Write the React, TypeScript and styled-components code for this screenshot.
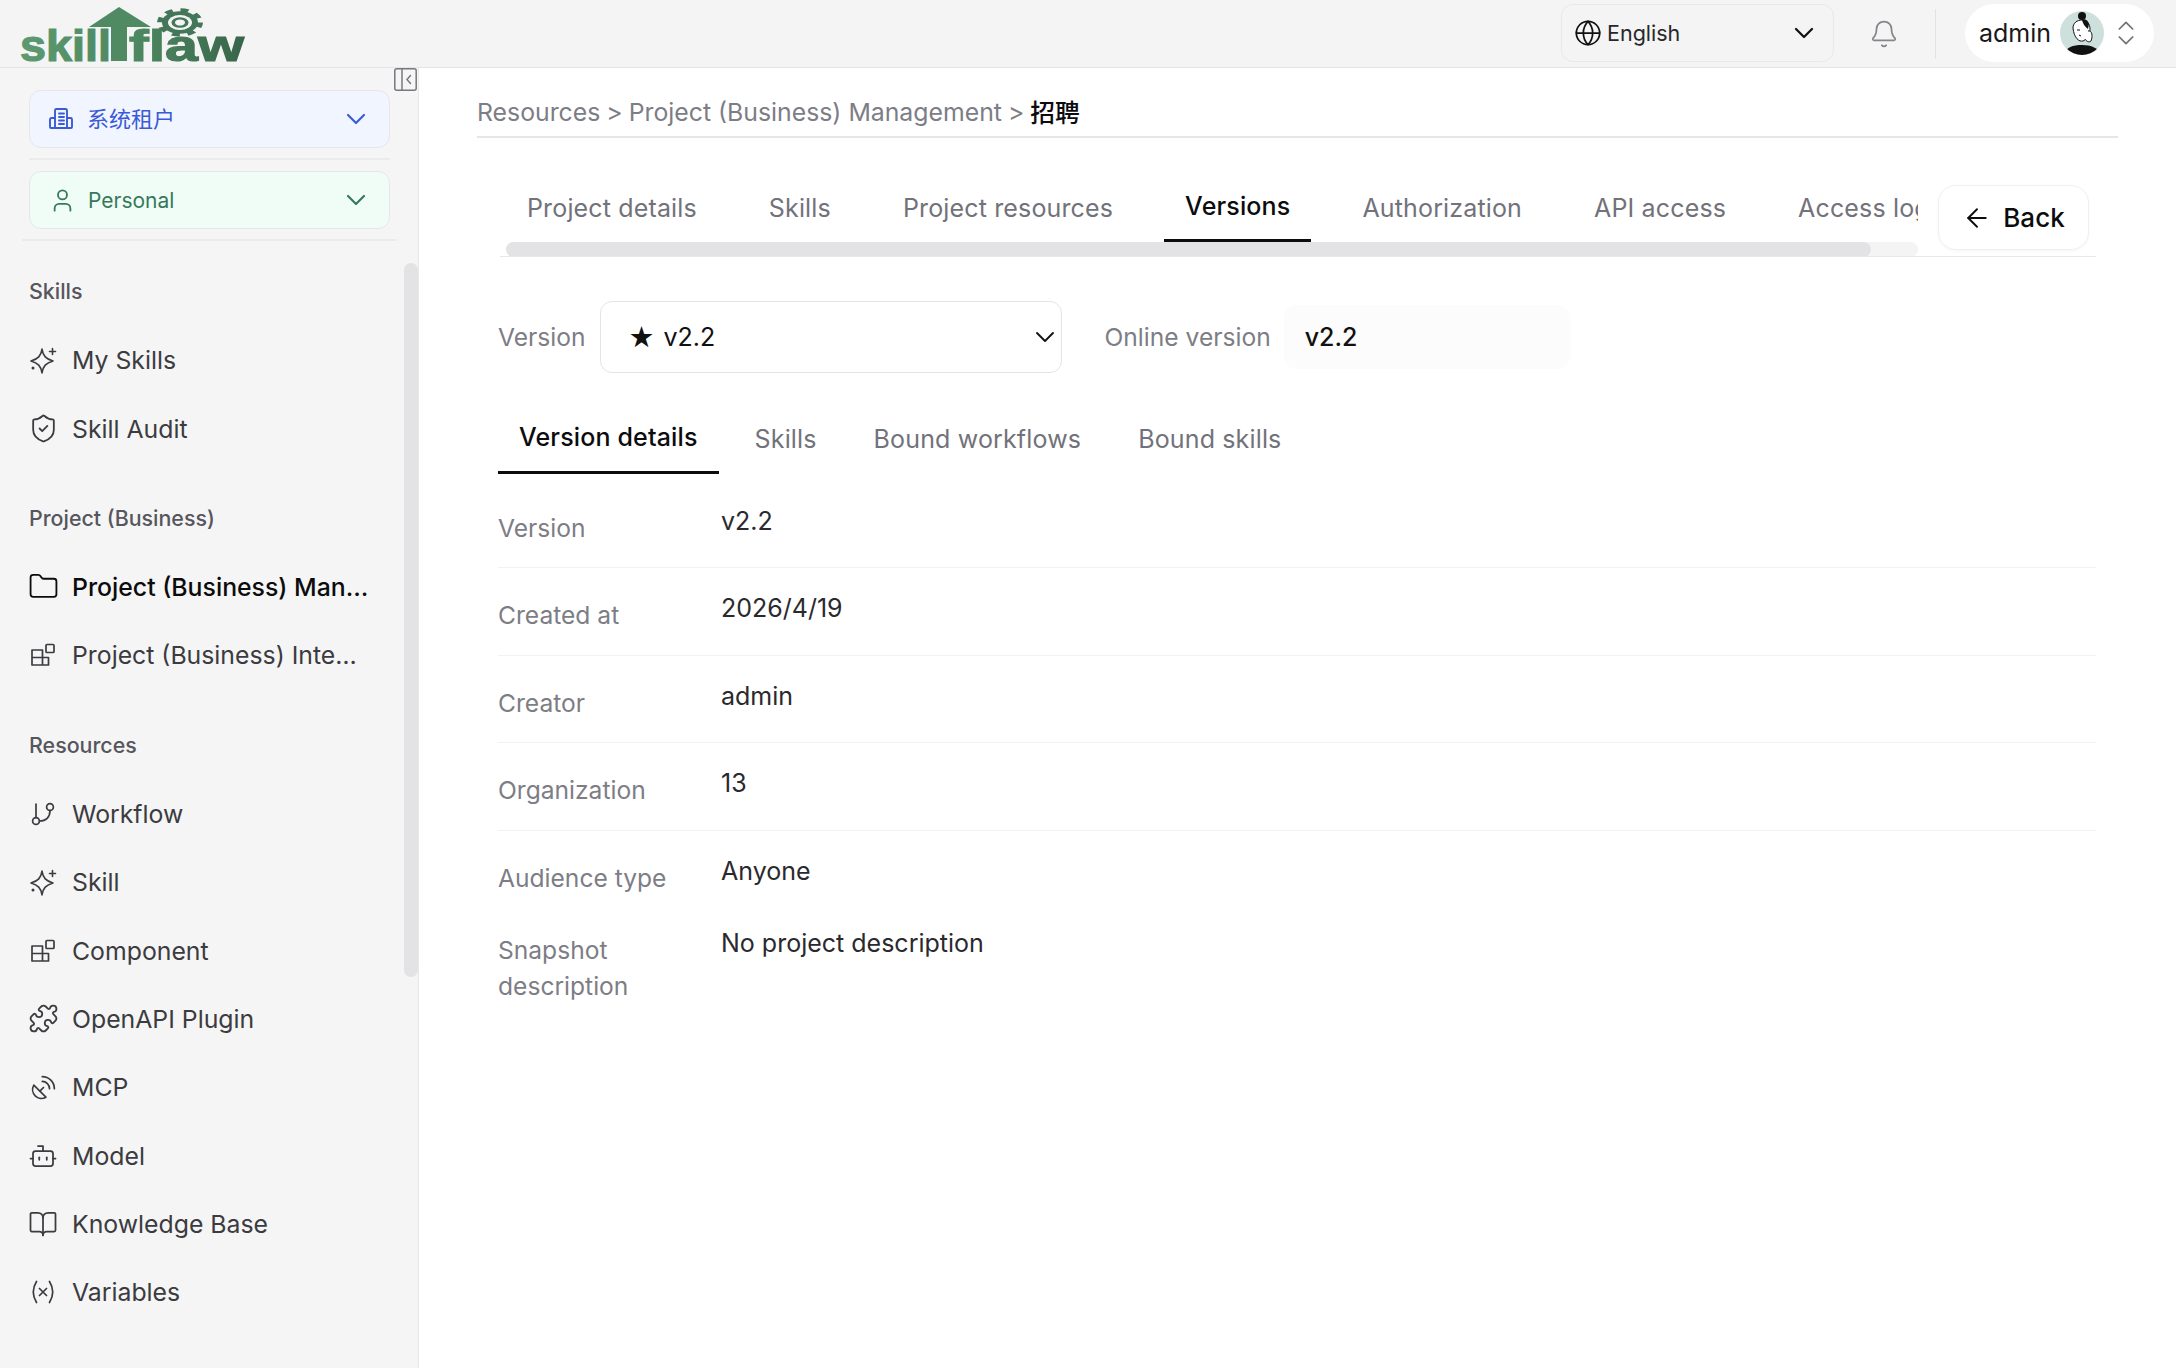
import React from "react";
import styled, { createGlobalStyle } from "styled-components";
import {
  ArrowLeft,
  Bell,
  BookOpen,
  Bot,
  ChevronDown,
  ChevronsUpDown,
  Folder,
  Globe,
  Puzzle,
  SatelliteDish,
  ShieldCheck,
  User,
} from "lucide-react";

const Global = createGlobalStyle`
  html, body { margin: 0; padding: 0; height: 100%; background: #fff; }
  body { font-family: Inter, "Noto Sans CJK SC", sans-serif; overflow: hidden; }
  * { box-sizing: border-box; }
  svg { flex: none; }
`;

const Page = styled.div`
  width: 2176px;
  height: 1368px;
  display: flex;
  flex-direction: column;
  overflow: hidden;
`;

const Header = styled.header`
  height: 68px;
  flex: none;
  background: #f4f4f4;
  border-bottom: 1px solid #e4e4e6;
  display: flex;
  align-items: center;
  padding: 0 22px 0 20px;
`;

const LogoBox = styled.div`
  width: 226px;
  height: 62px;
  margin-top: -4px;
  svg { overflow: visible; display: block; }
`;

const HeaderSpacer = styled.div`
  flex: 1;
`;

const LangSelect = styled.div`
  width: 273px;
  height: 58px;
  border: 1px solid #e8e8ea;
  border-radius: 12px;
  display: flex;
  align-items: center;
  padding: 0 13px 0 12px;
  gap: 5px;
  font-size: 21.5px;
  color: #27272a;
  margin-top: -2px;
`;

const LangName = styled.span`
  flex: 1;
`;

const BellSlot = styled.div`
  width: 50px;
  margin-left: 25px;
  display: flex;
  justify-content: center;
  color: #85858c;
`;

const HeaderRule = styled.div`
  width: 1px;
  height: 50px;
  background: #e2e2e4;
  margin: 0 29px 0 26px;
`;

const UserPill = styled.div`
  width: 189px;
  height: 58px;
  background: #fff;
  border-radius: 29px;
  display: flex;
  align-items: center;
  padding: 0 8px 0 14px;
  font-size: 25px;
  color: #18181b;
  gap: 9px;
  margin-top: -2px;
`;

const UserArrows = styled.div`
  color: #71717a;
  display: flex;
  margin-left: -3px;
`;

const Body = styled.div`
  flex: 1;
  display: flex;
  min-height: 0;
`;

const Sidebar = styled.aside`
  width: 419px;
  flex: none;
  background: #f5f5f5;
  border-right: 1px solid #e8e8ea;
  position: relative;
  padding: 22px 28px 0 29px;
`;

const CollapseButton = styled.div`
  position: absolute;
  right: 1px;
  top: 0;
  width: 23px;
  height: 23px;
  color: #77777e;
  display: flex;
`;

const ScrollThumb = styled.div`
  position: absolute;
  right: 0;
  top: 195px;
  width: 14px;
  height: 714px;
  background: #e3e3e5;
  border-radius: 7px;
`;

const Picker = styled.div<{ $tone: "blue" | "green" }>`
  height: 58px;
  width: 361px;
  border-radius: 12px;
  border: 1px solid #e6e6ea;
  display: flex;
  align-items: center;
  padding: 0 17px 0 19px;
  gap: 14px;
  font-size: 21px;
  background: ${(p) => (p.$tone === "blue" ? "#f1f5ff" : "#f0fdf6")};
  color: ${(p) => (p.$tone === "blue" ? "#3a5bd6" : "#36795a")};
`;

const PickerLabel = styled.span<{ $cjk?: boolean }>`
  flex: 1;
  font-size: ${(p) => (p.$cjk ? "22px" : "21px")};
  padding-bottom: ${(p) => (p.$cjk ? "5px" : "0")};
  margin-left: ${(p) => (p.$cjk ? "0" : "-2px")};
`;

const PickerRule = styled.div<{ $wide?: boolean }>`
  height: 2px;
  background: #ebebec;
  margin: ${(p) => (p.$wide ? "10px -7px 0" : "10px 0 11px")};
  width: ${(p) => (p.$wide ? "375px" : "361px")};
`;

const SectionLabel = styled.div<{ $first?: boolean }>`
  height: 40px;
  line-height: 40px;
  font-size: 21.4px;
  font-weight: 500;
  color: #56565c;
  margin-top: ${(p) => (p.$first ? "30px" : "35px")};
  margin-bottom: 15px;
`;

const NavRow = styled.div<{ $active?: boolean }>`
  height: 68.4px;
  display: flex;
  align-items: center;
  gap: 15px;
  font-size: 24.8px;
  white-space: nowrap;
  font-weight: ${(p) => (p.$active ? 500 : 400)};
  color: ${(p) => (p.$active ? "#0c0c0e" : "#3b3b40")};
`;

const NavIcon = styled.span`
  width: 28px;
  flex: none;
  display: flex;
  justify-content: center;
`;

const Main = styled.main`
  flex: 1;
  min-width: 0;
  padding: 0 58px 0 58px;
`;

const Breadcrumb = styled.div`
  height: 70px;
  border-bottom: 2px solid #e6e6e8;
  display: flex;
  align-items: center;
  font-size: 24.8px;
  color: #7d7d85;
  gap: 6px;
  padding-top: 20px;
`;

const CrumbCurrent = styled.span`
  color: #0c0c0e;
  font-weight: 500;
  margin-top: -2px;
  font-family: "Noto Sans CJK SC", sans-serif;
`;

const TabsBar = styled.div`
  margin: 46px 22px 0 23px;
  height: 73px;
  display: flex;
  border-bottom: 1px solid #e8e8ea;
`;

const TabsScroller = styled.div`
  width: 1418px;
  padding-left: 6px;
  display: flex;
  flex-direction: column;
  overflow: hidden;
`;

const TabStrip = styled.div`
  display: flex;
  gap: 30px;
  height: 58px;
  white-space: nowrap;
`;

const TopTab = styled.div<{ $active?: boolean }>`
  padding: ${(p) => (p.$active ? "0 21px 12px" : "0 21px 8px")};
  height: 58px;
  display: flex;
  align-items: center;
  flex: none;
  font-size: 25px;
  letter-spacing: 0.15px;
  font-weight: ${(p) => (p.$active ? 500 : 400)};
  color: ${(p) => (p.$active ? "#0c0c0e" : "#72727a")};
  border-bottom: 3px solid ${(p) => (p.$active ? "#0c0c0e" : "transparent")};
`;

const HScrollTrack = styled.div`
  height: 15px;
  background: #f4f4f5;
  border-radius: 8px;
`;

const HScrollThumb = styled.div`
  width: 1365px;
  height: 15px;
  background: #e3e3e5;
  border-radius: 8px;
`;

const BackButton = styled.div`
  width: 151px;
  height: 65px;
  margin-left: 20px;
  margin-top: 1px;
  border: 1px solid #f0f0f2;
  border-radius: 18px;
  background: #fff;
  box-shadow: 0 1px 3px rgba(0, 0, 0, 0.04);
  display: flex;
  align-items: center;
  justify-content: center;
  gap: 11px;
  font-size: 26px;
  font-weight: 500;
  color: #0c0c0e;
`;

const VersionBar = styled.div`
  margin: 44px 0 0 21px;
  height: 72px;
  display: flex;
  align-items: center;
`;

const FieldLabel = styled.span`
  font-size: 24.6px;
  color: #7d7d85;
`;

const VersionSelect = styled.div`
  width: 462px;
  height: 72px;
  margin-left: 14px;
  border: 1px solid #e4e4e7;
  border-radius: 12px;
  display: flex;
  align-items: center;
  padding: 0 0 0 28px;
  font-size: 25px;
  color: #111;
`;

const SelectText = styled.span`
  flex: 1;
  display: flex;
  align-items: center;
  gap: 9px;
`;

const StarMark = styled.span`
  font-family: "DejaVu Sans", sans-serif;
  font-size: 29px;
  line-height: 1;
`;

const OnlineLabel = styled(FieldLabel)`
  margin-left: 43px;
`;

const OnlineValue = styled.div`
  width: 286px;
  height: 64px;
  margin-left: 13px;
  border-radius: 12px;
  background: #fcfcfc;
  display: flex;
  align-items: center;
  padding-left: 21px;
  font-size: 25px;
  font-weight: 500;
  color: #111;
`;

const SubTabs = styled.div`
  margin: 27px 0 0 21px;
  height: 74px;
  display: flex;
  gap: 15px;
`;

const SubTab = styled.div<{ $active?: boolean }>`
  padding: ${(p) => (p.$active ? "3px 21px 0" : "7px 21px 0")};
  font-size: 25px;
  letter-spacing: 0.15px;
  display: flex;
  align-items: center;
  font-weight: ${(p) => (p.$active ? 500 : 400)};
  color: ${(p) => (p.$active ? "#0c0c0e" : "#72727a")};
  border-bottom: 3px solid ${(p) => (p.$active ? "#0c0c0e" : "transparent")};
`;

const DetailList = styled.dl`
  margin: 7px 22px 0 21px;
`;

const DetailRow = styled.div<{ $plain?: boolean }>`
  display: flex;
  min-height: ${(p) => (p.$plain ? "72px" : "87.4px")};
  border-bottom: 1px solid ${(p) => (p.$plain ? "transparent" : "#f2f2f3")};
`;

const DetailTerm = styled.dt`
  width: 223px;
  flex: none;
  font-size: 24.6px;
  line-height: 36px;
  color: #7d7d85;
  padding-top: 29px;
`;

const DetailValue = styled.dd`
  margin: 0;
  font-size: 25px;
  line-height: 36px;
  color: #2a2a2e;
  padding-top: 22px;
`;

const Sparkle = () => (
  <svg width="28" height="28" viewBox="0 0 28 28" fill="none" stroke="#3b3b40" strokeWidth="1.6" strokeLinejoin="round" strokeLinecap="round">
    <path d="M13 3C14 10 17 13 24 15 17 17 14 20 13 27 12 20 9 17 2 15 9 13 12 10 13 3z" />
    <path d="M23.500 2.500v6M20.500 5.500h6" />
    <circle cx="4" cy="22" r=".7" fill="#3b3b40" />
  </svg>
);

const Blocks = () => (
  <svg width="26" height="24" viewBox="0 0 26 24" fill="none" stroke="#3b3b40" strokeWidth="1.7" strokeLinejoin="round">
    <rect x="16" y="1.500" width="8" height="8" rx="1" />
    <path d="M2 7h10.500v15H2zM2 14.500h16.500V22H12.500" />
  </svg>
);

const Flow = () => (
  <svg width="26" height="26" viewBox="0 0 26 26" fill="none" stroke="#3b3b40" strokeWidth="1.7" strokeLinecap="round">
    <circle cx="6" cy="20" r="3.400" />
    <circle cx="20" cy="6" r="3.400" />
    <path d="M6 16.500V3M9.500 20c6.500 0 10.500-3.500 10.500-10.500" />
  </svg>
);

const VariableIcon = () => (
  <svg width="26" height="26" viewBox="0 0 26 26" fill="none" stroke="#3b3b40" strokeWidth="1.7" strokeLinecap="round">
    <path d="M6.500 2.500C2.500 9 2.500 17 6.500 23.500M19.500 2.500c4 6.500 4 14.500 0 21M9.500 9.500l7 7M16.500 9.500l-7 7" />
  </svg>
);

const Tenant = () => (
  <svg width="24" height="24" viewBox="0 0 24 24" fill="none" stroke="#3a5bd6" strokeWidth="1.9" strokeLinejoin="round" strokeLinecap="round">
    <path d="M6 21V3.500C6 2.600 6.600 2 7.500 2h9c.9 0 1.500.6 1.500 1.500V21" />
    <path d="M6 11H2.500C1.700 11 1 11.700 1 12.500V20c0 .6.400 1 1 1h20c.6 0 1-.4 1-1v-7.500c0-.8-.7-1.500-1.500-1.500H18" />
    <path d="M10 6.500h5M10 10h5M10 13.500h5M10 17h5" />
  </svg>
);

const CollapseGlyph = () => (
  <svg width="23" height="23" viewBox="0 0 23 23" fill="none" stroke="currentColor" strokeWidth="1.500">
    <rect x=".8" y=".8" width="21.400" height="21.400" rx="2" />
    <path d="M8 1v21" />
    <path d="M16.500 7.500l-3.500 4 3.500 4" strokeLinecap="round" />
  </svg>
);

const Logo = () => (
  <svg width="226" height="62" viewBox="0 0 226 62">
    <defs>
      <linearGradient id="logoStart" x1="0" y1="0" x2="1" y2="0">
        <stop offset="0" stopColor="#5c9a70" />
        <stop offset="1" stopColor="#4f8a63" />
      </linearGradient>
      <linearGradient id="logoEnd" x1="0" y1="0" x2="1" y2="0">
        <stop offset="0" stopColor="#4f8a63" />
        <stop offset="1" stopColor="#38654a" />
      </linearGradient>
    </defs>
    <path d="M69 26l30-20 32 20h-24v34H91V26z" fill="#4f8a63" />
    <text x="0" y="60" fontFamily="Liberation Sans, sans-serif" fontWeight="700" fontSize="44" textLength="91" lengthAdjust="spacingAndGlyphs" fill="url(#logoStart)" stroke="url(#logoStart)" strokeWidth="1.200">skill</text>
    <text x="109" y="60" fontFamily="Liberation Sans, sans-serif" fontWeight="700" fontSize="44" textLength="115" lengthAdjust="spacingAndGlyphs" fill="url(#logoEnd)" stroke="url(#logoEnd)" strokeWidth="1.200">flaw</text>
    <g transform="translate(160 21.500) scale(1 .62)">
      <circle r="19" fill="none" stroke="#44775a" strokeWidth="8" strokeDasharray="7.500 7.400" />
      <circle r="18" fill="#44775a" />
      <circle r="12" fill="#f4f4f4" />
      <circle r="8.500" fill="#44775a" />
      <circle r="5" fill="#f4f4f4" />
    </g>
  </svg>
);

const Avatar = () => (
  <svg width="44" height="44" viewBox="0 0 44 44">
    <defs>
      <clipPath id="avatarClip"><circle cx="22" cy="22" r="22" /></clipPath>
    </defs>
    <g clipPath="url(#avatarClip)">
      <rect width="44" height="44" fill="#cde0dc" />
      <path d="M4 44c2-8 9-10 18-10s17 3 19 10z" fill="#111" />
      <circle cx="22" cy="5" r="4" fill="#111" />
      <path d="M13 17c0-5 4-8 9-8s8 4 8 9-2 10-7 12c-4 1-9-3-10-13z" fill="#fff" stroke="#111" strokeWidth="1" />
      <path d="M22 9c2-2 6 0 7 4l-1 5c-3-2-5-5-6-9z" fill="#111" />
      <path d="M28 20c4-1 5 5 3 10-2 2-5 0-6-2" fill="#fff" stroke="#111" strokeWidth="1" />
      <path d="M17 19h3M19 24l2 1" stroke="#111" strokeWidth="1" fill="none" />
    </g>
  </svg>
);

type NavEntry = { label: string; icon: React.ReactNode; active?: boolean };

const navStroke = { strokeWidth: 1.4, color: "#3b3b40" };

const sections: { title: string; items: NavEntry[] }[] = [
  {
    title: "Skills",
    items: [
      { label: "My Skills", icon: <Sparkle /> },
      { label: "Skill Audit", icon: <ShieldCheck size={31} {...navStroke} /> },
    ],
  },
  {
    title: "Project (Business)",
    items: [
      { label: "Project (Business) Man…", icon: <Folder size={31} {...navStroke} color="#0c0c0e" />, active: true },
      { label: "Project (Business) Inte…", icon: <Blocks /> },
    ],
  },
  {
    title: "Resources",
    items: [
      { label: "Workflow", icon: <Flow /> },
      { label: "Skill", icon: <Sparkle /> },
      { label: "Component", icon: <Blocks /> },
      { label: "OpenAPI Plugin", icon: <Puzzle size={31} {...navStroke} /> },
      { label: "MCP", icon: <SatelliteDish size={29} {...navStroke} /> },
      { label: "Model", icon: <Bot size={30} {...navStroke} /> },
      { label: "Knowledge Base", icon: <BookOpen size={30} {...navStroke} /> },
      { label: "Variables", icon: <VariableIcon /> },
    ],
  },
];

const topTabs = ["Project details", "Skills", "Project resources", "Versions", "Authorization", "API access", "Access logs"];
const subTabs = ["Version details", "Skills", "Bound workflows", "Bound skills"];
const details = [
  ["Version", "v2.2"],
  ["Created at", "2026/4/19"],
  ["Creator", "admin"],
  ["Organization", "13"],
];

export default function App() {
  return (
    <Page>
      <Global />
      <Header>
        <LogoBox><Logo /></LogoBox>
        <HeaderSpacer />
        <LangSelect>
          <Globe size={28} strokeWidth={1.5} color="#111" />
          <LangName>English</LangName>
          <ChevronDown size={32} strokeWidth={1.7} color="#111" />
        </LangSelect>
        <BellSlot><Bell size={30} strokeWidth={1.4} /></BellSlot>
        <HeaderRule />
        <UserPill>
          admin
          <Avatar />
          <UserArrows><ChevronsUpDown size={32} strokeWidth={1.3} /></UserArrows>
        </UserPill>
      </Header>
      <Body>
        <Sidebar>
          <CollapseButton><CollapseGlyph /></CollapseButton>
          <ScrollThumb />
          <Picker $tone="blue">
            <Tenant />
            <PickerLabel $cjk>系统租户</PickerLabel>
            <ChevronDown size={32} strokeWidth={1.6} />
          </Picker>
          <PickerRule />
          <Picker $tone="green">
            <User size={27} strokeWidth={1.6} />
            <PickerLabel>Personal</PickerLabel>
            <ChevronDown size={32} strokeWidth={1.6} />
          </Picker>
          <PickerRule $wide />
          {sections.map((s, i) => (
            <React.Fragment key={s.title}>
              <SectionLabel $first={i === 0}>{s.title}</SectionLabel>
              {s.items.map((item) => (
                <NavRow key={item.label} $active={item.active}>
                  <NavIcon>{item.icon}</NavIcon>
                  {item.label}
                </NavRow>
              ))}
            </React.Fragment>
          ))}
        </Sidebar>
        <Main>
          <Breadcrumb>
            <span>Resources</span><span>&gt;</span>
            <span>Project (Business) Management</span><span>&gt;</span>
            <CrumbCurrent>招聘</CrumbCurrent>
          </Breadcrumb>
          <TabsBar>
            <TabsScroller>
              <TabStrip>
                {topTabs.map((t) => (
                  <TopTab key={t} $active={t === "Versions"}>{t}</TopTab>
                ))}
              </TabStrip>
              <HScrollTrack><HScrollThumb /></HScrollTrack>
            </TabsScroller>
            <BackButton>
              <ArrowLeft size={30} strokeWidth={1.5} />
              Back
            </BackButton>
          </TabsBar>
          <VersionBar>
            <FieldLabel>Version</FieldLabel>
            <VersionSelect>
              <SelectText><StarMark>★</StarMark>v2.2</SelectText>
              <ChevronDown size={32} strokeWidth={1.4} />
            </VersionSelect>
            <OnlineLabel>Online version</OnlineLabel>
            <OnlineValue>v2.2</OnlineValue>
          </VersionBar>
          <SubTabs>
            {subTabs.map((t, i) => (
              <SubTab key={t} $active={i === 0}>{t}</SubTab>
            ))}
          </SubTabs>
          <DetailList>
            {details.map(([k, v]) => (
              <DetailRow key={k}>
                <DetailTerm>{k}</DetailTerm>
                <DetailValue>{v}</DetailValue>
              </DetailRow>
            ))}
            <DetailRow $plain>
              <DetailTerm>Audience type</DetailTerm>
              <DetailValue>Anyone</DetailValue>
            </DetailRow>
            <DetailRow $plain>
              <DetailTerm>Snapshot<br />description</DetailTerm>
              <DetailValue>No project description</DetailValue>
            </DetailRow>
          </DetailList>
        </Main>
      </Body>
    </Page>
  );
}
